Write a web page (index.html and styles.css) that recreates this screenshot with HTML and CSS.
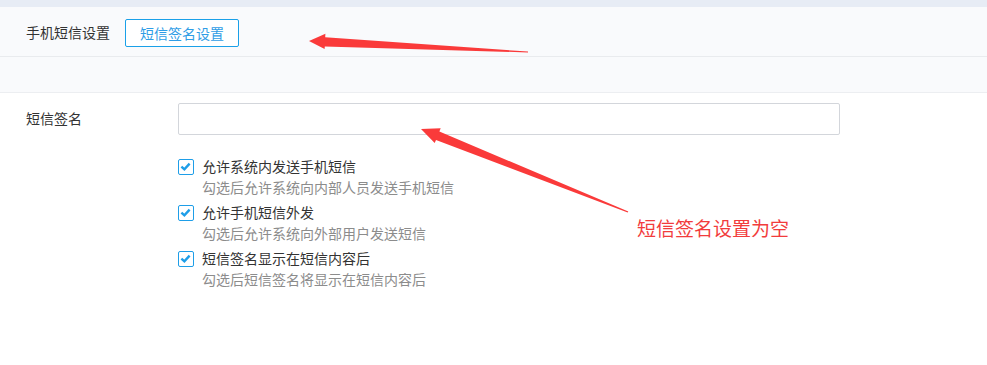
FILE: index.html
```html
<!DOCTYPE html>
<html lang="zh-CN">
<head>
  <meta charset="UTF-8" />
  <title>手机短信设置</title>
  <link rel="stylesheet" href="styles.css">
</head>
<body>
  <div class="topbar"></div>

  <header class="header">
    <span class="title">手机短信设置</span>
    <button class="tab-btn">短信签名设置</button>
  </header>

  <div class="subbar"></div>

  <section class="form">
    <div class="row">
      <label class="row-label" for="sign">短信签名</label>
      <input class="text-input" id="sign" type="text" />
    </div>

    <ul class="checks">
      <li class="check-item">
        <div class="check-line"><span class="box"><svg viewBox="0 0 13 13"><path d="M2.4 6.6 L5.4 9.4 L10.6 3.6" /></svg></span>允许系统内发送手机短信</div>
        <div class="check-desc">勾选后允许系统向内部人员发送手机短信</div>
      </li>
      <li class="check-item">
        <div class="check-line"><span class="box"><svg viewBox="0 0 13 13"><path d="M2.4 6.6 L5.4 9.4 L10.6 3.6" /></svg></span>允许手机短信外发</div>
        <div class="check-desc">勾选后允许系统向外部用户发送短信</div>
      </li>
      <li class="check-item">
        <div class="check-line"><span class="box"><svg viewBox="0 0 13 13"><path d="M2.4 6.6 L5.4 9.4 L10.6 3.6" /></svg></span>短信签名显示在短信内容后</div>
        <div class="check-desc">勾选后短信签名将显示在短信内容后</div>
      </li>
    </ul>
  </section>

  <!-- annotation overlay -->
  <svg class="marks" width="987" height="365" viewBox="0 0 987 365">
    <polygon points="309,41 325.4,33.8 325.2,37.2 528,51.6 528,52.4 324.8,46.6 324.6,49" />
    <polygon points="421,129 440.7,128.3 439.4,131.5 628.3,211.6 627.7,212.4 436,139.9 434.7,143.1" />
  </svg>
  <div class="note">短信签名设置为空</div>
</body>
</html>
```

FILE: styles.css
```css
body {
  margin: 0;
  font-family: "Noto Sans CJK SC", "Noto Sans", sans-serif;
  font-size: 14px;
  color: #333;
  background: #fff;
  position: relative;
  width: 987px;
  height: 365px;
  overflow: hidden;
}
.topbar {
  height: 7px;
  background: #e7ecf5;
}
.header {
  display: flex;
  align-items: center;
  height: 49px;
  padding: 0 26px;
  background: #f9fafc;
  border-bottom: 1px solid #e9ebee;
}
.title {
  color: #333;
}
.tab-btn {
  margin-left: 15px;
  width: 114px;
  height: 28px;
  padding: 0;
  font-family: inherit;
  font-size: 14px;
  color: #2f9de6;
  background: #fff;
  border: 1px solid #1aa0e8;
  border-radius: 2px;
  margin-top: 2px;
}
.subbar {
  height: 35px;
  background: #f9fafc;
  border-bottom: 1px solid #eceef1;
}
.form {
  padding: 10px 26px 0;
}
.row {
  display: flex;
  align-items: center;
}
.row-label {
  width: 152px;
  color: #333;
  margin-top: -3px;
}
.text-input {
  box-sizing: border-box;
  width: 662px;
  height: 32px;
  border: 1px solid #d3d6db;
  border-radius: 2px;
  outline: none;
}
.checks {
  list-style: none;
  margin: 21px 0 0 152px;
  padding: 0;
}
.check-item {
  margin-bottom: 4px;
}
.check-line,
.check-desc {
  line-height: 21px;
}
.check-line {
  display: flex;
  align-items: center;
  color: #333;
}
.check-desc {
  padding-left: 24px;
  color: #8c8c8c;
}
.box {
  box-sizing: border-box;
  width: 16px;
  height: 16px;
  flex: none;
  margin-right: 8px;
  border: 1.5px solid #1e9ee8;
  border-radius: 2px;
  background: #fff;
  display: flex;
}
.box svg {
  width: 13px;
  height: 13px;
}
.box path {
  fill: none;
  stroke: #1e9ee8;
  stroke-width: 2.4;
}
.marks {
  position: absolute;
  left: 0;
  top: 0;
  pointer-events: none;
}
.marks polygon {
  fill: #fa3a3a;
}
.note {
  position: absolute;
  left: 637px;
  top: 215px;
  font-size: 19px;
  line-height: 26px;
  color: #f23c3c;
}
```
